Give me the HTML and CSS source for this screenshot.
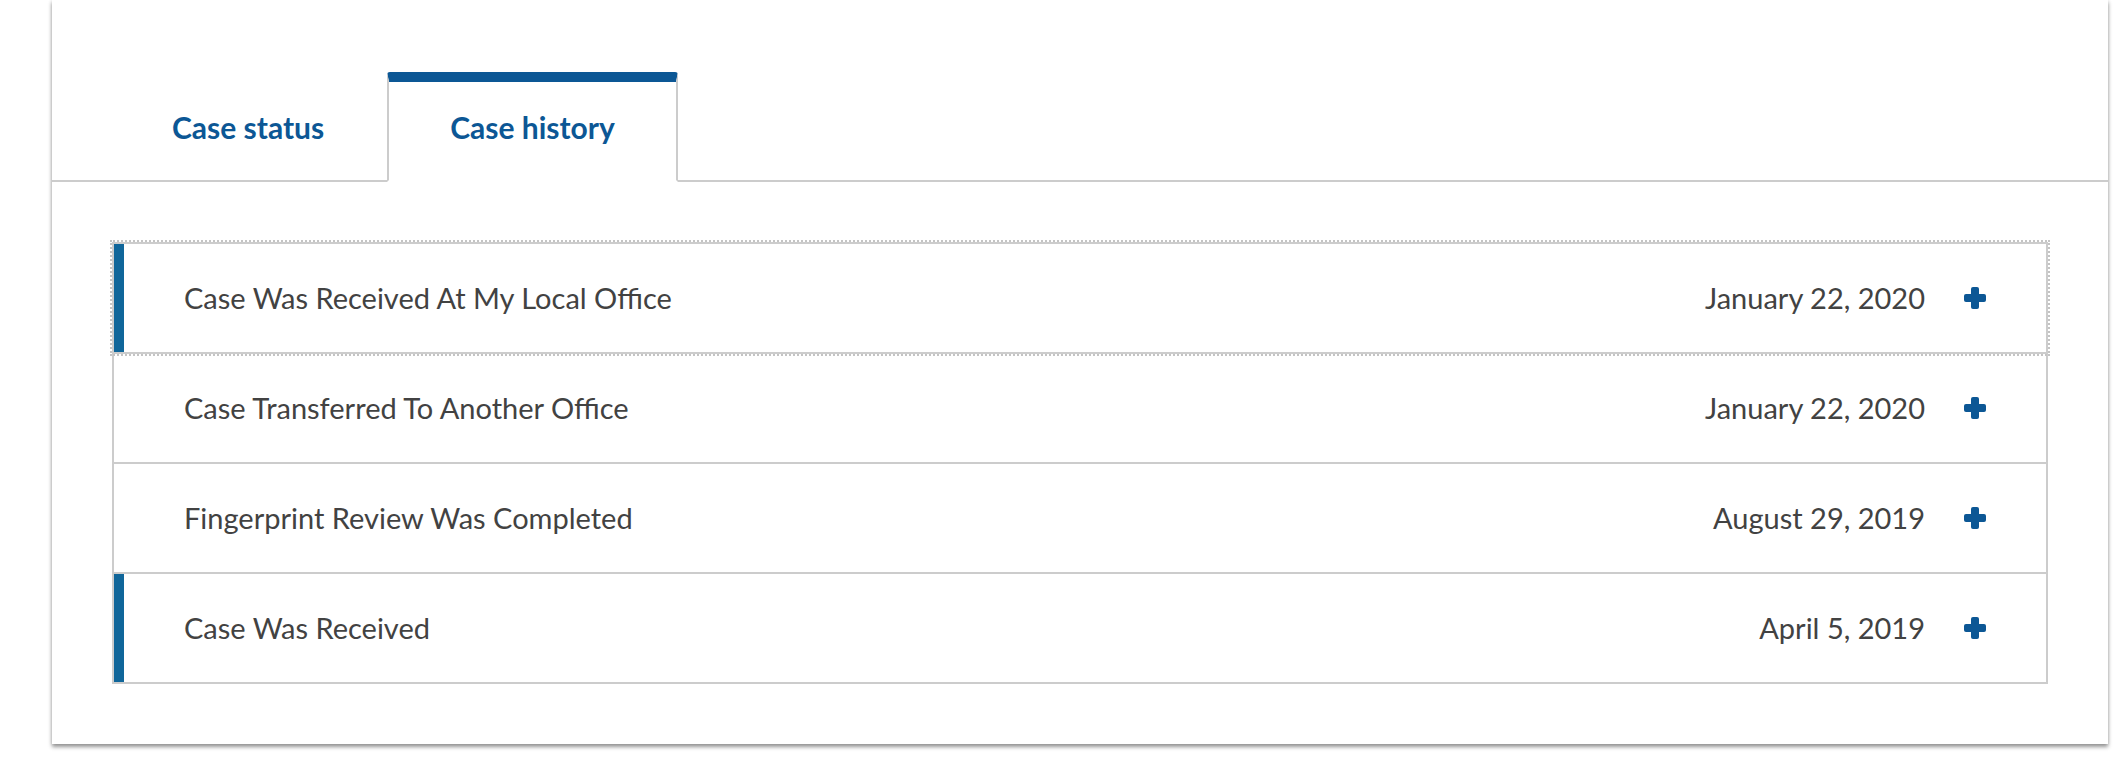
FILE: index.html
```html
<!DOCTYPE html>
<html lang="en">
<head>
<meta charset="utf-8">
<title>Case history</title>
<link rel="stylesheet" href="styles.css">
</head>
<body>
<section class="card">
  <div class="tabs" role="tablist">
    <button class="tab" role="tab">Case status</button>
    <button class="tab tab-active" role="tab" aria-selected="true">Case history</button>
  </div>
  <div class="panel">
    <ul class="history">
      <li class="item item-new item-focus">
        <span class="item-title">Case Was Received At My Local Office</span>
        <span class="item-date">January 22, 2020</span>
        <svg class="plus" viewBox="0 0 22 22" aria-hidden="true"><rect x="0" y="7" width="22" height="8" rx="2"/><rect x="7" y="0" width="8" height="22" rx="2"/></svg>
      </li>
      <li class="item">
        <span class="item-title">Case Transferred To Another Office</span>
        <span class="item-date">January 22, 2020</span>
        <svg class="plus" viewBox="0 0 22 22" aria-hidden="true"><rect x="0" y="7" width="22" height="8" rx="2"/><rect x="7" y="0" width="8" height="22" rx="2"/></svg>
      </li>
      <li class="item">
        <span class="item-title">Fingerprint Review Was Completed</span>
        <span class="item-date">August 29, 2019</span>
        <svg class="plus" viewBox="0 0 22 22" aria-hidden="true"><rect x="0" y="7" width="22" height="8" rx="2"/><rect x="7" y="0" width="8" height="22" rx="2"/></svg>
      </li>
      <li class="item item-new">
        <span class="item-title">Case Was Received</span>
        <span class="item-date">April 5, 2019</span>
        <svg class="plus" viewBox="0 0 22 22" aria-hidden="true"><rect x="0" y="7" width="22" height="8" rx="2"/><rect x="7" y="0" width="8" height="22" rx="2"/></svg>
      </li>
    </ul>
  </div>
</section>
</body>
</html>
```
FILE: styles.css
```css
html, body {
  margin: 0;
  padding: 0;
  background: #ffffff;
}

body {
  font-family: "Lato", "Liberation Sans", sans-serif;
  color: #424242;
  min-height: 760px;
}

.card {
  box-sizing: border-box;
  width: 2056px;
  margin-left: 52px;
  padding-top: 72px;
  background: #ffffff;
  box-shadow: 0 3px 4px rgba(0, 0, 0, 0.4), 0 0 4px rgba(0, 0, 0, 0.12);
}

.tabs {
  display: flex;
  align-items: flex-end;
  padding-left: 57px;
  border-bottom: 2px solid #cccccc;
  height: 108px;
}

.tab {
  box-sizing: content-box;
  margin: 0 0 -2px 0;
  padding: 30px 61px 38px;
  height: 30px;
  border: 2px solid transparent;
  border-top-width: 10px;
  background: transparent;
  font-family: "Lato", "Liberation Sans", sans-serif;
  font-weight: 700;
  font-size: 30px;
  line-height: 30px;
  color: #0c5795;
  cursor: pointer;
}

.tab-active {
  background: #ffffff;
  border-color: #cccccc;
  border-top-color: #0c5795;
  border-bottom-color: #ffffff;
  border-radius: 3px 3px 0 0;
}

.panel {
  padding: 60px;
}

.history {
  list-style: none;
  margin: 0;
  padding: 0;
}

.item {
  display: flex;
  align-items: center;
  height: 108px;
  padding: 0 60px 0 70px;
  border: 2px solid #cccccc;
  border-top-width: 0;
  font-size: 29px;
  line-height: 36px;
}

.item:first-child {
  border-top-width: 2px;
}

.item-new {
  box-shadow: inset 10px 0 0 #10669a;
}

.item-focus {
  outline: 2px dotted #c4c4c4;
}

.item-title {
  flex: 1;
}

.item-date {
  margin-right: 39px;
}

.plus {
  width: 22px;
  height: 22px;
  fill: #0c5795;
  flex: none;
}
```
